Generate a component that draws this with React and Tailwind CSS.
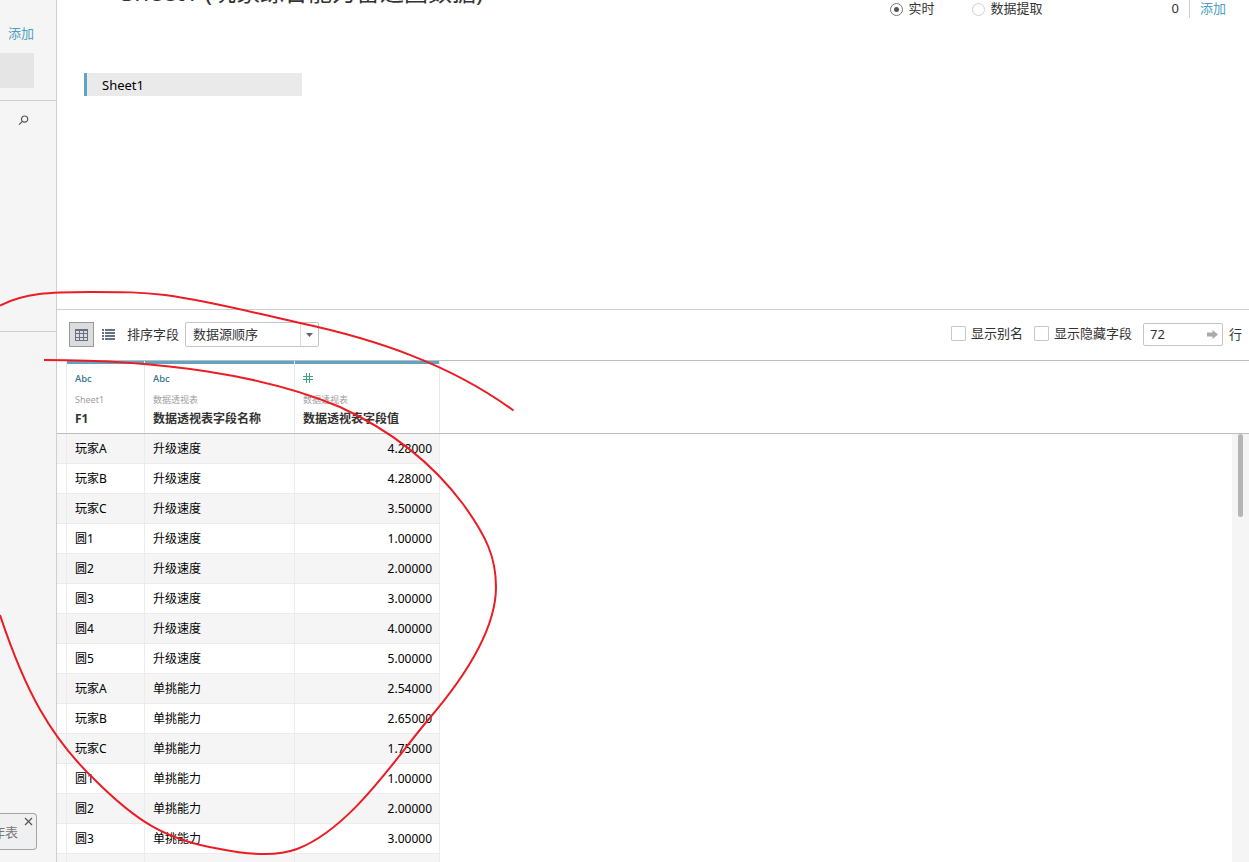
import React, { useState } from 'react';

const columns = [
  { type: 'Abc', source: 'Sheet1', name: 'F1' },
  { type: 'Abc', source: '数据透视表', name: '数据透视表字段名称' },
  { type: '#', source: '数据透视表', name: '数据透视表字段值' },
];

const rows = [
  ['玩家A', '升级速度', '4.28000'],
  ['玩家B', '升级速度', '4.28000'],
  ['玩家C', '升级速度', '3.50000'],
  ['圆1', '升级速度', '1.00000'],
  ['圆2', '升级速度', '2.00000'],
  ['圆3', '升级速度', '3.00000'],
  ['圆4', '升级速度', '4.00000'],
  ['圆5', '升级速度', '5.00000'],
  ['玩家A', '单挑能力', '2.54000'],
  ['玩家B', '单挑能力', '2.65000'],
  ['玩家C', '单挑能力', '1.75000'],
  ['圆1', '单挑能力', '1.00000'],
  ['圆2', '单挑能力', '2.00000'],
  ['圆3', '单挑能力', '3.00000'],
];

function Sidebar() {
  return (
    <aside className="flex w-[57px] shrink-0 flex-col border-r border-[#cfcfcf] bg-[#f5f5f5]">
      <div className="h-[101px] border-b border-[#cfcfcf] pt-[23px]">
        <a className="block pl-2 text-[13px] leading-5 text-[#4e9fc1]">添加</a>
        <div className="mt-[10px] h-[35px] w-[34px] bg-[#e5e5e5]" />
      </div>
      <div className="h-[231px] border-b border-[#cfcfcf] pt-[14px] pl-[18px]">
        <svg width="11" height="11" viewBox="0 0 11 11" fill="none" stroke="#555" strokeWidth="1.2">
          <circle cx="6.6" cy="4.1" r="3.1" />
          <path d="M4.4 6.3 1 9.7" />
        </svg>
      </div>
      <div className="relative mt-auto mb-3 flex h-[37px] w-[37px] justify-end overflow-hidden rounded-r-sm border border-l-0 border-[#a5a5a5] bg-[#f0f0f0]">
        <span className="mt-[8px] mr-[18px] whitespace-nowrap text-[13px] leading-5 text-[#777]">工作表</span>
        <svg className="absolute top-[3px] right-[3px]" width="9" height="9" viewBox="0 0 9 9" stroke="#555" strokeWidth="1.2">
          <path d="M1 1 8 8M8 1 1 8" />
        </svg>
      </div>
    </aside>
  );
}

function Canvas() {
  return (
    <section className="h-[310px] shrink-0 border-b border-[#cfcfcf]">
      <div className="flex h-[73px] justify-between overflow-hidden">
        <h1 className="-mt-[24px] ml-[64px] text-[24px] leading-8 whitespace-pre text-[#333]">
          Sheet1 (玩家综合能力雷达图数据)
        </h1>
        <div className="flex h-[18px] items-center pr-[23px] text-[13px] text-[#333]">
          <span className="mr-[6px] flex h-[13px] w-[13px] items-center justify-center rounded-full border border-[#777]">
            <span className="h-[5px] w-[5px] rounded-full bg-[#555]" />
          </span>
          <span>实时</span>
          <span className="mr-[6px] ml-[37px] h-[13px] w-[13px] rounded-full border border-[#cfcfcf]" />
          <span>数据提取</span>
          <span className="ml-[129px]">0</span>
          <span className="mr-[10px] ml-[10px] h-[18px] w-px bg-[#cfcfcf]" />
          <a className="text-[#4e9fc1]">添加</a>
        </div>
      </div>
      <div className="ml-[27px] flex h-[23px] w-[218px] items-center border-l-[3px] border-[#62a3c4] bg-[#eaeaea] pl-[15px] text-[13px] text-black">
        <span className="mt-[3px]">Sheet1</span>
      </div>
    </section>
  );
}

function Checkbox({ label, checked, onChange }) {
  return (
    <label className="flex items-center">
      <input
        type="checkbox"
        checked={checked}
        onChange={onChange}
        className="mr-[5px] mb-px h-[15px] w-[15px] appearance-none rounded-[1px] border border-[#c8c8c8] bg-white checked:bg-[#62a3c4]"
      />
      {label}
    </label>
  );
}

function Toolbar() {
  const [aliases, setAliases] = useState(false);
  const [hidden, setHidden] = useState(false);

  return (
    <section className="flex h-[51px] shrink-0 items-center border-b border-[#bdbdbd] pl-3 text-[13px] text-[#333]">
      <button className="mb-px flex h-[25px] w-[25px] items-center justify-center border border-[#999] bg-[#dcdcdc]">
        <svg width="13" height="12" viewBox="0 0 13 12" fill="none" stroke="#667186" shapeRendering="crispEdges">
          <path d="M.5 1.5h12v10H.5zM.5 4.5h12M.5 8.5h12M4.5 1v10M8.5 1v10" />
          <path d="M0 1h13" strokeWidth="2" />
        </svg>
      </button>
      <svg className="mb-px ml-2" width="13" height="11" viewBox="0 0 13 11" fill="#667186" shapeRendering="crispEdges">
        <path d="M0 0h2v2H0zM3 0h10v2H3zM0 3h2v2H0zM3 3h10v2H3zM0 6h2v2H0zM3 6h10v2H3zM0 9h2v2H0zM3 9h10v2H3z" />
      </svg>
      <span className="ml-3">排序字段</span>
      <div className="mb-px ml-[6px] flex h-[25px] w-[134px] items-center rounded-[2px] border border-[#c4c4c4] pl-[7px]">
        <span className="grow pt-px">数据源顺序</span>
        <span className="flex h-full w-[18px] items-center justify-center border-l border-[#dcdcdc]">
          <svg width="7" height="4" viewBox="0 0 7 4" fill="#666">
            <path d="M0 0h7L3.5 4z" />
          </svg>
        </span>
      </div>

      <div className="ml-auto flex items-center pr-[7px]">
        <div className="flex items-center gap-[11px] pb-[2px]">
          <Checkbox label="显示别名" checked={aliases} onChange={() => setAliases(!aliases)} />
          <Checkbox label="显示隐藏字段" checked={hidden} onChange={() => setHidden(!hidden)} />
        </div>
        <div className="mb-[2px] ml-[11px] flex h-[23px] w-[80px] items-center justify-between rounded-[2px] border border-[#c4c4c4] pr-[4px] pl-[6px]">
          <span className="pt-px">72</span>
          <svg width="11" height="9" viewBox="0 0 11 9" fill="#aaa">
            <path d="M0 2.5h5.5V0L11 4.5 5.5 9V6.5H0z" />
          </svg>
        </div>
        <span className="ml-[6px]">行</span>
      </div>
    </section>
  );
}

function DataGrid() {
  return (
    <section className="flex min-h-0 grow flex-col">
      <div className="flex h-[73px] shrink-0 border-b border-[#bdbdbd]">
        <div className="grid grid-cols-[10px_78px_150px_145px]">
          <div className="border-r border-[#e9e9e9]" />
          {columns.map((col, index) => (
            <div key={index} className="flex flex-col border-r border-[#e9e9e9]">
              <div className="h-[3px] bg-[#62a3c4]" />
              <div className="flex grow flex-col pl-2 whitespace-nowrap">
                <div className="mt-[7px] flex h-4 items-center text-[9.5px] font-medium text-[#31738f]">
                  {col.type === '#' ? (
                    <svg className="mb-[2px]" width="10" height="10" viewBox="0 0 10 10" stroke="#3fa37e" shapeRendering="crispEdges">
                      <path d="M3.5 0v10M6.5 0v10M0 3.5h10M0 6.5h10" />
                    </svg>
                  ) : (
                    col.type
                  )}
                </div>
                <div className="mt-[5px] text-[9px] leading-4 text-[#a0a0a0]">{col.source}</div>
                <div className="mt-px text-[12px] leading-5 font-bold text-[#333]">{col.name}</div>
              </div>
            </div>
          ))}
        </div>
      </div>

      <div className="flex min-h-0 grow justify-between overflow-hidden">
        <div className="text-[12px] text-black">
          {rows.map(([player, field, value], index) => (
            <div
              key={index}
              className="grid h-[30px] grid-cols-[10px_78px_150px_145px] leading-[29px] odd:bg-[#f5f5f5] *:border-r *:border-b *:border-[#ececec]"
            >
              <div />
              <div className="pl-2">{player}</div>
              <div className="pl-2">{field}</div>
              <div className="pr-[7px] text-right">{value}</div>
            </div>
          ))}
          {/* Top edge of the next row */}
          <div className="grid h-[30px] grid-cols-[10px_78px_150px_145px] bg-[#f5f5f5] *:border-r *:border-[#ececec]">
            <div />
            <div />
            <div />
            <div />
          </div>
        </div>
        <div className="w-[17px] bg-[#f5f5f5] pl-[6px]">
          <div className="h-[83px] w-[5px] rounded-full bg-[#b5b5b5]" />
        </div>
      </div>
    </section>
  );
}

// Red pen marks circling the pivoted fields
function PenMarks() {
  return (
    <svg
      className="pointer-events-none absolute inset-0"
      width="1249"
      height="862"
      viewBox="0 0 1249 862"
      fill="none"
      stroke="#ec1c24"
      strokeWidth="2"
    >
      <path d="M0 305.5C25 293 50 292 90 292C125 292 140 292 165 295C215 302 250 312 300 323C375 339 450 364 513.5 410.5" />
      <path d="M44 360C160 360 265 375 340 407C390 430 433 464 463 504C487 537 496 558 496 587C496 630 465 677 428 720C395 759 350 829 297 849C286 853 278 854 265 854C250 854 235 852 220 849C165 840 135 820 95 780C50 737 25 690 0 615" />
    </svg>
  );
}

function App() {
  return (
    <div className="relative flex h-[862px] w-[1249px] overflow-hidden bg-white font-['Noto_Sans','Noto_Sans_CJK_SC',sans-serif]">
      <Sidebar />
      <main className="flex min-w-0 grow flex-col">
        <Canvas />
        <Toolbar />
        <DataGrid />
      </main>
      <PenMarks />
    </div>
  );
}

export default App;
